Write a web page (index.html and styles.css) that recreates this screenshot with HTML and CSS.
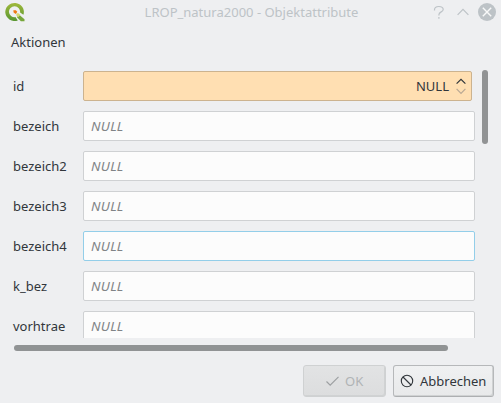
FILE: index.html
```html
<!DOCTYPE html>
<html lang="de">
<head>
<meta charset="utf-8">
<title>LROP_natura2000 - Objektattribute</title>
<link rel="stylesheet" href="styles.css">
</head>
<body>
<div class="dialog">
  <header class="titlebar">
    <svg class="logo" width="20" height="20" viewBox="0 0 20 20">
      <defs><linearGradient id="leaf" x1="0" y1="0" x2="0" y2="1"><stop offset="0" stop-color="#a0b93c"/><stop offset="1" stop-color="#589632"/></linearGradient></defs>
      <path d="M12.8 18.4A9.3 9 0 1 1 18.4 12.8L15.1 10.4A5.6 5.4 0 1 0 10.4 15.1Z" fill="url(#leaf)"/>
      <path d="M13.6 12.2l5.9 5.1v1.9h-3.6l-3.9-4z" fill="#76a63a"/>
      <path d="M11.7 11.2h1.8l1.8 1.7-2.2 2.4-1.9-2z" fill="#d5d873"/>
      <path d="M8.4 8.3h2.4l1.5 1.5-1.5 2.1-2.2-1.3z" fill="#ee7913"/>
    </svg>
    <h1 class="title">LROP_natura2000 - Objektattribute</h1>
    <div class="controls">
      <svg width="66" height="20" viewBox="0 0 66 20" fill="none" stroke="#bdc3c7" stroke-width="1.2">
        <path d="M2.5 8.5V7.8Q2.5 4.5 6.8 4.5Q11.2 4.5 11.2 7.5C11.2 10 6.9 9.8 6.9 12.7V13.4M6.9 15.1V16.7"/>
        <path d="M25.6 12.8L31 7.4L36.4 12.8"/>
        <circle cx="55" cy="10" r="9" fill="#bdc3c7" stroke="none"/>
        <path d="M50.8 5.8L59.2 14.2M59.2 5.8L50.8 14.2" stroke="#f8f9f9" stroke-width="1.4"/>
      </svg>
    </div>
  </header>
  <nav class="menubar"><span>Aktionen</span></nav>
  <main class="viewport">
    <div class="form">
      <label class="label">id</label>
      <div class="field spin"><span>NULL</span>
        <svg width="12" height="20" viewBox="0 0 12 20" fill="none" stroke-width="1.2"><path d="M1.6 7.7L6 3.3L10.4 7.7" stroke="#31363b"/><path d="M1.6 12.9L6 17.3L10.4 12.9" stroke="#b9a894"/></svg>
      </div>
      <label class="label">bezeich</label><div class="field">NULL</div>
      <label class="label">bezeich2</label><div class="field">NULL</div>
      <label class="label">bezeich3</label><div class="field">NULL</div>
      <label class="label">bezeich4</label><div class="field hover">NULL</div>
      <label class="label">k_bez</label><div class="field">NULL</div>
      <label class="label">vorhtrae</label><div class="field">NULL</div>
    </div>
    <div class="vscroll"></div>
  </main>
  <div class="hscroll"></div>
  <footer class="buttons">
    <div class="button ok"><svg width="14" height="14" viewBox="0 0 14 14" fill="none" stroke="#9da0a2" stroke-width="1.2"><path d="M0.5 7.5L4.2 11.2L12.5 2.9"/></svg><span>OK</span></div>
    <div class="button cancel"><svg width="14" height="14" viewBox="0 0 14 14" fill="none" stroke="#31363b" stroke-width="1.1"><circle cx="7" cy="7" r="5.7"/><path d="M3 3L11 11"/></svg><span>Abbrechen</span></div>
  </footer>
</div>
</body>
</html>
```
FILE: styles.css
```css
* { box-sizing: border-box; }
body { margin: 0; }
.dialog {
  width: 501px;
  height: 403px;
  display: flex;
  flex-direction: column;
  overflow: hidden;
  background: #eeeff1;
  color: #31363b;
  font: 13px/20px "Noto Sans", sans-serif;
}
.titlebar {
  display: grid;
  grid-template-columns: 66px 1fr 66px;
  align-items: center;
  height: 26px;
  padding: 0 3px 2px 5px;
}
.logo { display: block; margin-top: -1px; }
.title {
  margin: 0;
  text-align: center;
  font: inherit;
  color: #bdc3c7;
}
.controls, .controls svg { display: block; }
.menubar { height: 44px; padding: 6px 11px 0; }
.viewport { display: flex; height: 268px; }
.form {
  width: 475px;
  flex: none;
  display: grid;
  grid-template-columns: 70px 392px;
  grid-auto-rows: 30px;
  align-content: start;
  row-gap: 10px;
  padding: 1px 0 0 13px;
  overflow: hidden;
}
.label { line-height: 30px; }
.field {
  height: 30px;
  padding: 0 7px;
  border: 1px solid #cfd1d3;
  border-radius: 2px;
  background: #fcfcfc;
  font-size: 13.4px;
  line-height: 28px;
  font-style: italic;
  letter-spacing: 0.3px;
  color: #808386;
}
.field.hover { border-color: #93cee9; }
.field.spin {
  display: flex;
  align-items: center;
  justify-content: flex-end;
  gap: 6px;
  width: 389px;
  padding-right: 4px;
  border-color: #ccb38f;
  background: #ffdfb2;
  font-size: 13px;
  font-style: normal;
  letter-spacing: 0;
  color: #31363b;
}
.vscroll {
  width: 6px;
  height: 74px;
  margin-left: 7px;
  border-radius: 3px;
  background: #919394;
}
.hscroll {
  flex: none;
  width: 434px;
  height: 6px;
  margin: 7px 0 0 14px;
  border-radius: 3px;
  background: #909394;
}
.buttons {
  display: flex;
  justify-content: flex-end;
  gap: 7px;
  padding: 14px 7px 0 0;
}
.button {
  height: 32px;
  display: flex;
  align-items: center;
  border: 1px solid #b6b8ba;
  border-bottom-color: #adafb1;
  border-radius: 3px;
  background: linear-gradient(#f0f1f2, #e8e9ea);
  box-shadow: inset -1px -1px 0 #d0d2d3;
}
.ok {
  width: 83px;
  padding-left: 22px;
  gap: 5px;
  border-color: #cfd1d2;
  background: linear-gradient(#e2e3e4, #dcddde);
  color: #b0b3b5;
}
.cancel { width: 101px; padding-left: 6px; gap: 6px; }
```
